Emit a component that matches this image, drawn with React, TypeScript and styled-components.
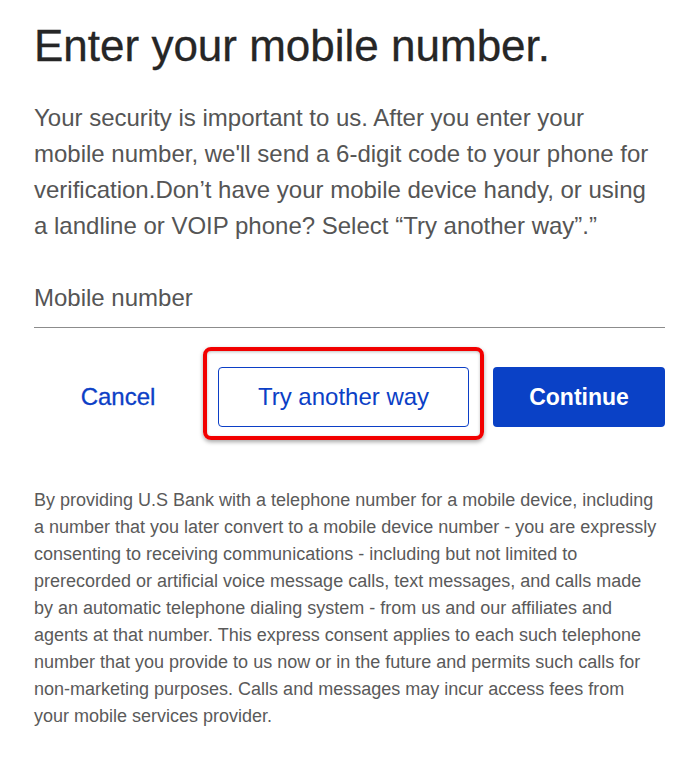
import React from "react";
import styled, { createGlobalStyle } from "styled-components";

const GlobalStyle = createGlobalStyle`
  body {
    margin: 0;
    background: #ffffff;
    font-family: "Liberation Sans", Arial, sans-serif;
  }
`;

const Page = styled.div`
  width: 631px;
  padding: 20px 26px 40px 34px;
`;

const Heading = styled.h1`
  margin: 0;
  font-size: 44px;
  line-height: 52px;
  font-weight: 400;
  color: #262626;
  -webkit-text-stroke: 0.3px #262626;
`;

const Intro = styled.p`
  margin: 28px 0 0;
  max-width: 624px;
  font-size: 24px;
  line-height: 36px;
  color: #555555;
`;

const Field = styled.div`
  margin-top: 40px;
  border-bottom: 1px solid #8c8c8c;
  padding-bottom: 15px;
`;

const FieldLabel = styled.label`
  display: block;
  font-size: 24px;
  line-height: 28px;
  color: #555555;
`;

const Actions = styled.div`
  display: flex;
  align-items: center;
  margin-top: 39px;
`;

const BaseButton = styled.button`
  height: 60px;
  padding: 0;
  border-radius: 4px;
  font-family: "Liberation Sans", Arial, sans-serif;
  font-size: 24px;
  cursor: pointer;
`;

const TextButton = styled(BaseButton)`
  width: 168px;
  background: transparent;
  border: none;
  color: #0c3fc6;
  -webkit-text-stroke: 0.3px #0c3fc6;
`;

const OutlineButton = styled(BaseButton)`
  position: relative;
  width: 251px;
  margin-left: 16px;
  background: #ffffff;
  border: 1px solid #0c3fc6;
  color: #0c3fc6;
`;

const Highlight = styled.span`
  position: absolute;
  top: -21px;
  bottom: -14px;
  left: -16px;
  right: -16px;
  border: 4px solid #f20000;
  border-radius: 8px;
  box-shadow: 0 2px 4px rgba(0, 0, 0, 0.35), inset 0 1px 3px rgba(0, 0, 0, 0.25);
  pointer-events: none;
`;

const PrimaryButton = styled(BaseButton)`
  width: 172px;
  margin-left: 24px;
  background: #0a41c6;
  border: none;
  color: #ffffff;
  font-size: 23px;
  font-weight: 700;
`;

const Disclaimer = styled.p`
  margin: 60px 0 0;
  max-width: 625px;
  font-size: 18px;
  line-height: 27px;
  color: #5a5a5a;
`;

const App = () => {
  return (
    <>
      <GlobalStyle />
      <Page>
        <Heading>Enter your mobile number.</Heading>
        <Intro>
          Your security is important to us. After you enter your mobile number,
          we'll send a 6-digit code to your phone for verification.Don’t have
          your mobile device handy, or using a landline or VOIP phone? Select
          “Try another way”.”
        </Intro>
        <Field>
          <FieldLabel>Mobile number</FieldLabel>
        </Field>
        <Actions>
          <TextButton>Cancel</TextButton>
          <OutlineButton>
            Try another way
            <Highlight />
          </OutlineButton>
          <PrimaryButton>Continue</PrimaryButton>
        </Actions>
        <Disclaimer>
          By providing U.S Bank with a telephone number for a mobile device,
          including a number that you later convert to a mobile device number -
          you are expressly consenting to receiving communications - including
          but not limited to prerecorded or artificial voice message calls, text
          messages, and calls made by an automatic telephone dialing system -
          from us and our affiliates and agents at that number. This express
          consent applies to each such telephone number that you provide to us
          now or in the future and permits such calls for non-marketing purposes.
          Calls and messages may incur access fees from your mobile services
          provider.
        </Disclaimer>
      </Page>
    </>
  );
};

export default App;
